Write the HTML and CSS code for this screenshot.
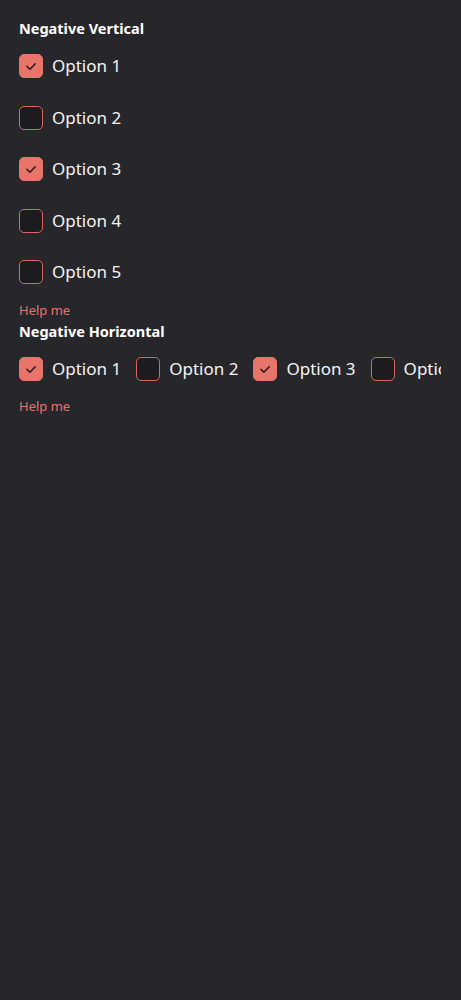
FILE: index.html
```html
<!DOCTYPE html>
<html>
<head>
<meta charset="utf-8">
<link rel="stylesheet" href="styles.css">
</head>
<body>
<main class="page">
  <section class="group">
    <h2 class="group-title">Negative Vertical</h2>
    <div class="options vertical">
      <label class="option"><span class="box checked"><svg viewBox="0 0 24 24"><path d="M7.5 12.3l3.3 3.2 5.8-6"/></svg></span><span class="label">Option 1</span></label>
      <label class="option"><span class="box"></span><span class="label">Option 2</span></label>
      <label class="option"><span class="box checked"><svg viewBox="0 0 24 24"><path d="M7.5 12.3l3.3 3.2 5.8-6"/></svg></span><span class="label">Option 3</span></label>
      <label class="option"><span class="box"></span><span class="label">Option 4</span></label>
      <label class="option"><span class="box"></span><span class="label">Option 5</span></label>
    </div>
    <p class="help">Help me</p>
  </section>
  <section class="group">
    <h2 class="group-title">Negative Horizontal</h2>
    <div class="options horizontal">
      <label class="option"><span class="box checked"><svg viewBox="0 0 24 24"><path d="M7.5 12.3l3.3 3.2 5.8-6"/></svg></span><span class="label">Option 1</span></label>
      <label class="option"><span class="box"></span><span class="label">Option 2</span></label>
      <label class="option"><span class="box checked"><svg viewBox="0 0 24 24"><path d="M7.5 12.3l3.3 3.2 5.8-6"/></svg></span><span class="label">Option 3</span></label>
      <label class="option"><span class="box"></span><span class="label">Option 4</span></label>
      <label class="option"><span class="box"></span><span class="label">Option 5</span></label>
    </div>
    <p class="help">Help me</p>
  </section>
</main>
</body>
</html>
```
FILE: styles.css
```css
html, body {
  margin: 0;
  padding: 0;
  background: #27262b;
  height: 100%;
}
body {
  font-family: "Noto Sans", "Open Sans", sans-serif;
  color: #f4f4f5;
}
.page {
  padding: 18px 20px 0 19px;
}
.group {
  display: flex;
  flex-direction: column;
}
.group + .group {
  margin-top: 2px;
}
.group-title {
  margin: 0;
  font-size: 14.5px;
  line-height: 20px;
  font-weight: 700;
  color: #ffffff;
}
.options {
  display: flex;
  margin-top: 16px;
}
.options.vertical {
  flex-direction: column;
  gap: 27.6px;
}
.options.horizontal {
  flex-direction: row;
  gap: 15px;
  overflow: hidden;
  margin-top: 16px;
}
.option {
  display: flex;
  align-items: center;
  gap: 9px;
  flex-shrink: 0;
  height: 24px;
}
.box {
  width: 24px;
  height: 24px;
  box-sizing: border-box;
  border: 1.5px solid #d9695f;
  border-radius: 5px;
  background: #1c1b20;
  display: flex;
  align-items: center;
  justify-content: center;
  flex-shrink: 0;
}
.box.checked {
  background: #e8756a;
  border-color: #e8756a;
}
.box svg {
  width: 24px;
  height: 24px;
  fill: none;
  stroke: #27151a;
  stroke-width: 1.6;
  stroke-linecap: round;
  stroke-linejoin: round;
}
.label {
  font-size: 17px;
  line-height: 24px;
  white-space: nowrap;
  color: #f4f4f5;
}
.help {
  margin: 17px 0 0;
  font-size: 13px;
  line-height: 18px;
  color: #e0766b;
}
.horizontal + .help {
  margin-top: 16px;
}
```
